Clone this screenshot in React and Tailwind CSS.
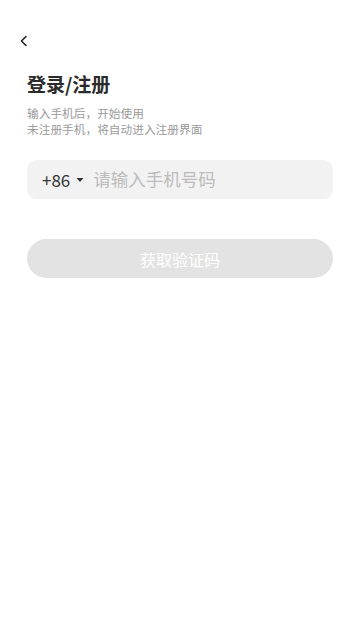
export default function App() {
  return (
    <div
      className="min-h-[640px] w-[360px] bg-white"
      style={{ fontFamily: '"Noto Sans CJK SC", "Noto Sans", sans-serif' }}
    >
      <div className="h-[33px]" />
      <div className="flex h-[16px] items-center pl-[18px]">
        <svg width="12" height="12" viewBox="0 0 12 12" fill="none">
          <path d="M8 1.5L3.5 6L8 10.5" stroke="#222" strokeWidth="1.6" strokeLinecap="round" strokeLinejoin="round" />
        </svg>
      </div>
      <div className="px-[27px]">
        <h1 className="mt-[22px] text-[19px] font-bold leading-[26px] text-[#2b2b2b]">登录/注册</h1>
        <div className="mt-[8px] text-[11.7px] leading-[16px] text-[#9a9a9a]">
          <p>输入手机后，开始使用</p>
          <p>未注册手机，将自动进入注册界面</p>
        </div>
        <div className="mt-[23px] flex h-[39px] items-center rounded-[9px] bg-[#f2f2f2] pl-[15px]">
          <span className="text-[17px] text-[#333]">+86</span>
          <svg className="ml-[6px]" width="8" height="6" viewBox="0 0 8 6">
            <path d="M0.5 1L7.5 1L4 5Z" fill="#333" />
          </svg>
          <span className="ml-[9px] text-[17.5px] text-[#bcbcbc]">请输入手机号码</span>
        </div>
        <button className="mt-[40px] flex h-[39px] w-full items-center justify-center rounded-full bg-[#e3e3e3] text-[16px] text-white">
          获取验证码
        </button>
      </div>
    </div>
  );
}
